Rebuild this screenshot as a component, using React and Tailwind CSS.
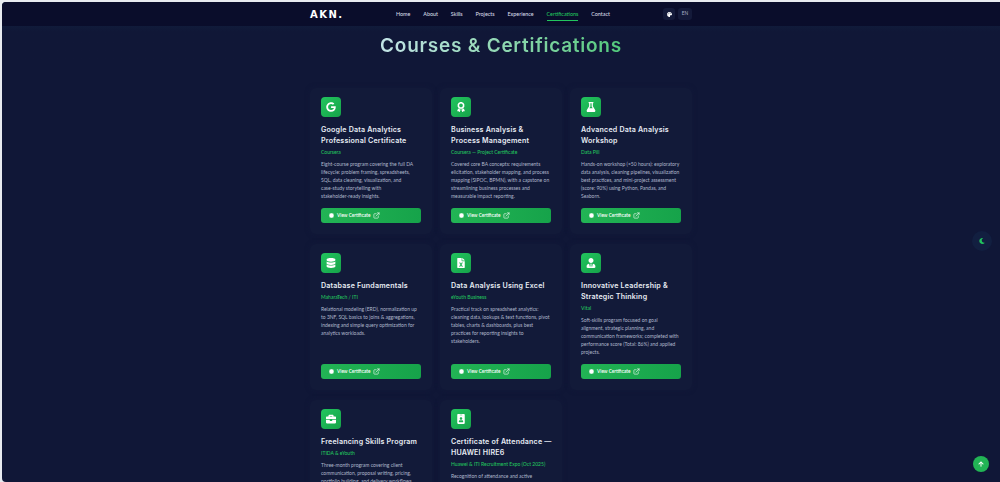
import React from "react";
import {
  FaGoogle,
  FaAward,
  FaFlask,
  FaDatabase,
  FaFileExcel,
  FaUserTie,
  FaBriefcase,
  FaIdBadge,
  FaCertificate,
  FaMoon,
  FaArrowUp,
  FaPalette,
} from "react-icons/fa";
import { ExternalLink } from "lucide-react";

const links = ["Home", "About", "Skills", "Projects", "Experience", "Certifications", "Contact"];

// line breaks are kept in the strings so the wrapping stays the same as the design
const certs = [
  {
    icon: FaGoogle,
    title: "Google Data Analytics\nProfessional Certificate",
    org: "Coursera",
    text: "Eight-course program covering the full DA\nlifecycle: problem framing, spreadsheets,\nSQL, data cleaning, visualization, and\ncase-study storytelling with\nstakeholder-ready insights.",
  },
  {
    icon: FaAward,
    title: "Business Analysis &\nProcess Management",
    org: "Coursera — Project Certificate",
    text: "Covered core BA concepts: requirements\nelicitation, stakeholder mapping, and process\nmapping (SIPOC, BPMN), with a capstone on\nstreamlining business processes and\nmeasurable impact reporting.",
  },
  {
    icon: FaFlask,
    title: "Advanced Data Analysis\nWorkshop",
    org: "Data Pill",
    text: "Hands-on workshop (≈50 hours): exploratory\ndata analysis, cleaning pipelines, visualization\nbest practices, and mini-project assessment\n(score: 90%) using Python, Pandas, and\nSeaborn.",
  },
  {
    icon: FaDatabase,
    title: "Database Fundamentals",
    org: "MaharaTech / ITI",
    text: "Relational modeling (ERD), normalization up\nto 3NF, SQL basics to joins & aggregations,\nindexing and simple query optimization for\nanalytics workloads.",
  },
  {
    icon: FaFileExcel,
    title: "Data Analysis Using Excel",
    org: "eYouth Business",
    text: "Practical track on spreadsheet analytics:\ncleaning data, lookups & text functions, pivot\ntables, charts & dashboards, plus best\npractices for reporting insights to\nstakeholders.",
  },
  {
    icon: FaUserTie,
    title: "Innovative Leadership &\nStrategic Thinking",
    org: "Vital",
    text: "Soft-skills program focused on goal\nalignment, strategic planning, and\ncommunication frameworks; completed with\nperformance score (Total: 86%) and applied\nprojects.",
  },
  {
    icon: FaBriefcase,
    title: "Freelancing Skills Program",
    org: "ITIDA & eYouth",
    text: "Three-month program covering client\ncommunication, proposal writing, pricing,\nportfolio building, and delivery workflows.",
  },
  {
    icon: FaIdBadge,
    title: "Certificate of Attendance —\nHUAWEI HIRE6",
    org: "Huawei & ITI Recruitment Expo (Oct 2025)",
    text: "Recognition of attendance and active\nparticipation in the recruitment expo.",
  },
];

const CertCard = ({ cert }) => {
  const Icon = cert.icon;
  return (
    <div className="flex flex-col rounded-md bg-[#121a39] p-[11px] pt-[9px] shadow-[0_0_5px_rgba(18,26,57,0.7)]">
      <div className="w-5 h-5 rounded bg-gradient-to-br from-[#22c55e] to-[#16a34a] flex items-center justify-center text-white text-[10px]">
        <Icon />
      </div>
      <h3 className="mt-[7px] text-[7.1px] leading-[11px] font-semibold text-[#e8ecf4] tracking-[0.2px] whitespace-pre font-['Inter','Liberation_Sans',sans-serif]">
        {cert.title}
      </h3>
      <p className="mt-[2px] text-[5px] leading-[8px] font-medium text-[#22c55e]">{cert.org}</p>
      <p className="mt-[4px] mb-[8px] text-[5px] leading-[8px] text-[#b0b8cc] whitespace-pre">{cert.text}</p>
      <button className="mt-auto h-[15px] w-full shrink-0 rounded-[3px] bg-gradient-to-r from-[#22b455] to-[#16a34a] flex items-center gap-[3px] pl-2 text-[4.7px] font-semibold text-white">
        <FaCertificate className="text-[5px]" />
        <span>View Certificate</span>
        <ExternalLink className="w-[7px] h-[7px]" strokeWidth={2} />
      </button>
    </div>
  );
};

export default function App() {
  return (
    <div className="relative h-[482px] overflow-hidden bg-[#e8ebf0] pl-[2px] pt-[2px] font-['Lato','Noto_Sans',sans-serif]">
      <div className="h-[480px] overflow-hidden rounded-tl-[4px] rounded-bl-[4px] bg-[#101737] bg-gradient-to-b from-[#122a47] via-[#101737] to-[#101737] bg-[length:100%_60px] bg-no-repeat">
        <nav className="h-6 bg-[#0a0d2b] flex items-center justify-center">
          <div className="w-[382px] flex items-center text-[5.4px] text-[#d5dae6]">
            <span className="w-[86px] text-[10px] font-bold tracking-[1.5px] text-white font-['DejaVu_Sans',sans-serif]">AKN.</span>
            <div className="flex items-center gap-[12.8px]">
              {links.map((link) =>
                link === "Certifications" ? (
                  <span key={link} className="relative text-[#22c55e] font-medium">
                    {link}
                    <span className="absolute left-0 right-0 bottom-[-3px] h-[1px] bg-[#22c55e]" />
                  </span>
                ) : (
                  <span key={link} className="font-medium">{link}</span>
                )
              )}
            </div>
            <div className="ml-auto flex items-center gap-[3px]">
              <span className="w-[12px] h-[12px] rounded-[3px] bg-[#141a3a] flex items-center justify-center text-white text-[5px]">
                <FaPalette />
              </span>
              <span className="w-[14px] h-[12px] rounded-[3px] bg-[#141a3a] flex items-center justify-center text-[4.8px] text-[#aab3c8]">EN</span>
            </div>
          </div>
        </nav>

        <h1 className="mt-[8px] text-center text-[19px] leading-[24px] font-semibold tracking-[0.75px] font-['Inter',sans-serif] text-transparent bg-clip-text bg-gradient-to-r from-[#c4e4e8] to-[#4fc97a] w-[246px] mx-auto whitespace-nowrap">
          Courses & Certifications
        </h1>

        <div className="mt-[30px] w-[382px] ml-[308px] grid grid-cols-3 gap-x-2 gap-y-[10px]">
          {certs.map((cert) => (
            <CertCard key={cert.title} cert={cert} />
          ))}
        </div>
      </div>

      {/* floating buttons */}
      <div className="absolute left-[972px] top-[231px] w-5 h-5 rounded-full bg-[#121f40] flex items-center justify-center text-[#22c55e] text-[6px]">
        <FaMoon />
      </div>
      <div className="absolute left-[973px] top-[456px] w-4 h-4 rounded-full bg-[#22b455] flex items-center justify-center text-white text-[6px]">
        <FaArrowUp />
      </div>
    </div>
  );
}
